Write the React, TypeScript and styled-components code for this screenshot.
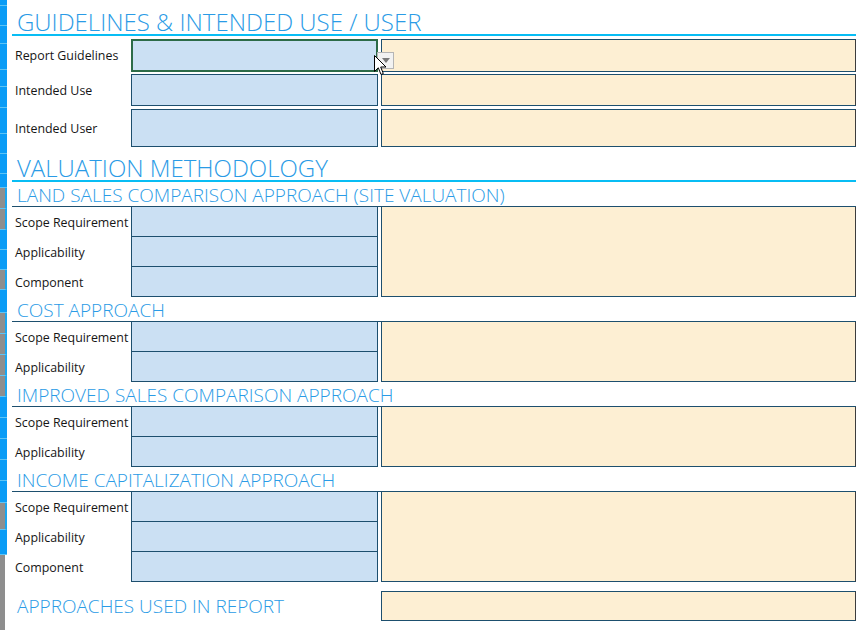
import React from 'react';
import styled, { createGlobalStyle } from 'styled-components';

const GlobalStyle = createGlobalStyle`
  html, body {
    margin: 0;
    padding: 0;
    background: #ffffff;
  }
  body {
    font-family: 'Open Sans', 'Noto Sans', sans-serif;
    width: 862px;
    height: 630px;
    overflow: hidden;
  }
`;

const Page = styled.div`
  display: flex;
  width: 862px;
  height: 630px;
`;

// row indicator strip on the far left
const Strip = styled.div`
  display: flex;
  flex-direction: column;
  width: 7px;
  flex-shrink: 0;
`;

const Segment = styled.div<{ $gray?: boolean; $narrow?: boolean; $h: number }>`
  height: ${({ $h }) => $h}px;
  box-sizing: border-box;
  width: ${({ $narrow }) => ($narrow ? '5px' : '7px')};
  background: ${({ $gray }) => ($gray ? '#8e8e8e' : '#0a9cf6')};
  border-right: ${({ $gray, $narrow }) => ($gray && !$narrow ? '2px solid #1aa6f0' : 'none')};
  border-bottom: ${({ $narrow }) => ($narrow ? 'none' : '1px solid #5ec4f5')};
`;

const Main = styled.div`
  width: 844px;
  margin-left: 5px;
  padding-top: 4px;
  position: relative;
`;

const Title = styled.h1<{ $top?: number }>`
  margin: ${({ $top }) => $top ?? 0}px 0 0;
  padding-left: 5px;
  height: 30px;
  line-height: 35px;
  font-size: 24px;
  font-weight: 300;
  color: #2a9be6;
  border-bottom: 2px solid #08bdf4;
  white-space: nowrap;
`;

const SubTitle = styled.h2`
  margin: 0;
  padding-left: 5px;
  height: 24px;
  line-height: 26px;
  font-size: 19px;
  font-weight: 300;
  color: #2a9be6;
  white-space: nowrap;
`;

const FieldRow = styled.div<{ $h: number; $top: number }>`
  display: grid;
  grid-template-columns: 116px 247px 475px;
  column-gap: 3px;
  height: ${({ $h }) => $h}px;
  margin-top: ${({ $top }) => $top}px;
`;

const Label = styled.div`
  display: flex;
  align-items: center;
  padding-left: 3px;
  font-size: 12.4px;
  color: #161616;
  white-space: nowrap;
`;

const InputBox = styled.div<{ $selected?: boolean }>`
  position: relative;
  box-sizing: border-box;
  background: #cbe0f3;
  border: ${({ $selected }) => ($selected ? '2px solid #2c6b47' : '1px solid #1d4f6e')};
`;

const NoteBox = styled.div`
  box-sizing: border-box;
  background: #fdefd3;
  border: 1px solid #1d4f6e;
  border-right-color: #3d3d3d;
`;

const Group = styled.div<{ $rows: number }>`
  display: grid;
  grid-template-columns: 116px 247px 475px;
  grid-template-rows: repeat(${({ $rows }) => $rows}, 30px);
  column-gap: 3px;
  border-top: 1px solid #1d4f6e;
`;

const Cell = styled.div`
  grid-column: 2;
  box-sizing: border-box;
  background: #cbe0f3;
  border: 1px solid #1d4f6e;
  border-top: none;
`;

const GroupNote = styled(NoteBox)<{ $rows: number }>`
  grid-column: 3;
  grid-row: 1 / span ${({ $rows }) => $rows};
  border-top: none;
`;

const GroupLabel = styled(Label)`
  grid-column: 1;
`;

const SummaryRow = styled.div`
  display: grid;
  grid-template-columns: 366px 475px;
  column-gap: 3px;
  height: 30px;
  margin-top: 9px;
`;

const SummaryLabel = styled.div`
  display: flex;
  align-items: center;
  padding-left: 5px;
  font-size: 19px;
  font-weight: 300;
  color: #2a9be6;
  white-space: nowrap;
`;

const DropButton = styled.div`
  position: absolute;
  left: 244px;
  top: 11px;
  width: 17px;
  height: 17px;
  box-sizing: border-box;
  background: #f2f2f2;
  border: 1px solid #b5b5b5;
  display: flex;
  align-items: center;
  justify-content: center;
  z-index: 2;
`;

const Cursor = styled.svg`
  position: absolute;
  left: 362px;
  top: 55px;
  z-index: 3;
`;

const stripSegments: { h: number; gray?: boolean; narrow?: boolean }[] = [
  { h: 6 }, { h: 20 }, { h: 18 }, { h: 26 }, { h: 17 }, { h: 21 }, { h: 26 }, { h: 20 }, { h: 20 }, { h: 14 },
  { h: 21, gray: true }, { h: 21, gray: true },
  { h: 20 }, { h: 20 },
  { h: 20, gray: true },
  { h: 23 },
  { h: 21, gray: true }, { h: 21, gray: true }, { h: 21, gray: true }, { h: 21, gray: true },
  { h: 21 }, { h: 21 }, { h: 21 }, { h: 21 }, { h: 22 },
  { h: 27, gray: true },
  { h: 25 },
  { h: 75, gray: true, narrow: true },
];

type Section = { title: string; fields: string[] };

const methods: Section[] = [
  { title: 'LAND SALES COMPARISON APPROACH (SITE VALUATION)', fields: ['Scope Requirement', 'Applicability', 'Component'] },
  { title: 'COST APPROACH', fields: ['Scope Requirement', 'Applicability'] },
  { title: 'IMPROVED SALES COMPARISON APPROACH', fields: ['Scope Requirement', 'Applicability'] },
  { title: 'INCOME CAPITALIZATION APPROACH', fields: ['Scope Requirement', 'Applicability', 'Component'] },
];

const guideRows = [
  { label: 'Report Guidelines', h: 33, top: 3 },
  { label: 'Intended Use', h: 32, top: 2 },
  { label: 'Intended User', h: 38, top: 3 },
];

export default function App() {
  return (
    <Page>
      <GlobalStyle />
      <Strip>
        {stripSegments.map((s, i) => (
          <Segment key={i} $h={s.h} $gray={s.gray} $narrow={s.narrow} />
        ))}
      </Strip>
      <Main>
        <Title>GUIDELINES &amp; INTENDED USE / USER</Title>
        {guideRows.map((r, i) => (
          <FieldRow key={r.label} $h={r.h} $top={r.top}>
            <Label>{r.label}</Label>
            <InputBox $selected={i === 0}>
              {i === 0 && (
                <DropButton>
                  <svg width="8" height="5" viewBox="0 0 8 5">
                    <path d="M0 0 L8 0 L4 5 Z" fill="#7a7a7a" />
                  </svg>
                </DropButton>
              )}
            </InputBox>
            <NoteBox />
          </FieldRow>
        ))}

        <Title $top={3}>VALUATION METHODOLOGY</Title>
        {methods.map((m) => (
          <React.Fragment key={m.title}>
            <SubTitle>{m.title}</SubTitle>
            <Group $rows={m.fields.length}>
              {m.fields.map((f, i) => (
                <React.Fragment key={f}>
                  <GroupLabel style={{ gridRow: i + 1 }}>{f}</GroupLabel>
                  <Cell style={{ gridRow: i + 1 }} />
                </React.Fragment>
              ))}
              <GroupNote $rows={m.fields.length} />
            </Group>
          </React.Fragment>
        ))}

        <SummaryRow>
          <SummaryLabel>APPROACHES USED IN REPORT</SummaryLabel>
          <NoteBox />
        </SummaryRow>

        <Cursor width="13" height="21" viewBox="0 0 13 21">
          <path
            d="M0.5 0.5 L0.5 16.5 L4.3 12.8 L7 19.5 L9.3 18.5 L6.7 12 L12 12 Z"
            fill="#ffffff"
            stroke="#000000"
            strokeWidth="1"
            strokeLinejoin="round"
          />
        </Cursor>
      </Main>
    </Page>
  );
}
